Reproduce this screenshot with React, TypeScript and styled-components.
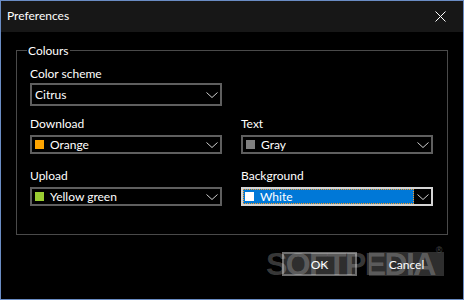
import React from 'react';
import styled, { createGlobalStyle } from 'styled-components';

const Global = createGlobalStyle`
  html, body { margin: 0; padding: 0; background: #000; }
  body { width: 464px; height: 300px; overflow: hidden; font-family: Lato, "Noto Sans", sans-serif; }
  * { box-sizing: border-box; }
`;

const Window = styled.div`
  position: relative;
  width: 464px;
  height: 300px;
  border: 1px solid #6a8cc4;
  background: #000;
  color: #fff;
  font-size: 12px;
  line-height: 15px;
  display: flex;
  flex-direction: column;
`;

const TitleBar = styled.div`
  height: 31px;
  flex: none;
  background: #171717;
  display: flex;
  align-items: flex-start;
  justify-content: space-between;
  padding: 7px 17px 0 6px;
`;

const Title = styled.span`
  color: #fff;
`;

const CloseBtn = styled.svg`
  margin-top: 3px;
  display: block;
`;

const Body = styled.div`
  padding: 18px 15px 0 15px;
  display: flex;
  flex-direction: column;
`;

const Group = styled.div`
  position: relative;
  height: 185px;
  border: 1px solid #4a4a4a;
  padding: 14px 13px 0 13px;
`;

const Legend = styled.span`
  position: absolute;
  top: -8px;
  left: 10px;
  padding: 0 1px;
  background: #000;
`;

const SchemeRow = styled.div`
  margin-bottom: 9px;
`;

const FieldGrid = styled.div`
  display: grid;
  grid-template-columns: 192px 192px;
  column-gap: 19px;
  row-gap: 13px;
`;

const Field = styled.div<{ $gap: number }>`
  display: flex;
  flex-direction: column;
  gap: ${(p) => p.$gap}px;
`;

const Label = styled.div`
  height: 16px;
  padding-top: 1px;
`;

const Combo = styled.div<{ $h: number; $focused?: boolean }>`
  width: 192px;
  height: ${(p) => p.$h}px;
  border: 2px solid ${(p) => (p.$focused ? '#d4d4d4' : '#5f5f5f')};
  display: flex;
  align-items: center;
  padding-left: 3px;
`;

const Selection = styled.div<{ $active?: boolean }>`
  flex: 1;
  height: 100%;
  display: flex;
  align-items: center;
  ${(p) =>
    p.$active
      ? `
    flex: none;
    width: 171px;
    margin-left: -3px;
    padding-left: 2px;
    background: #0078d7;
    outline: 1px dotted #ff9a1f;
    outline-offset: -1px;
  `
      : ''}
`;

const Swatch = styled.span<{ $color: string }>`
  width: 9px;
  height: 9px;
  flex: none;
  background: ${(p) => p.$color};
  margin-right: 6px;
`;

const Chevron = styled.svg`
  flex: none;
  margin-left: auto;
  margin-right: 2px;
  display: block;
`;

const ButtonRow = styled.div`
  margin-top: 17px;
  padding-right: 4px;
  display: flex;
  justify-content: flex-end;
  gap: 12px;
`;

const Button = styled.div<{ $default?: boolean }>`
  width: 75px;
  height: 24px;
  background: #2e2e2e;
  border: 2px solid ${(p) => (p.$default ? '#6e6e6e' : '#2e2e2e')};
  display: flex;
  align-items: center;
  justify-content: center;
  color: #fff;
`;

const Watermark = styled.div`
  position: absolute;
  left: 265px;
  top: 247px;
  font-family: "Liberation Sans", Arial, sans-serif;
  font-weight: bold;
  font-size: 32px;
  line-height: 32px;
  letter-spacing: -1.6px;
  color: rgba(255, 255, 255, 0.24);
  pointer-events: none;
  white-space: nowrap;
  sup {
    font-size: 9px;
    line-height: 9px;
    vertical-align: top;
    position: relative;
    top: -2px;
    left: 1px;
    letter-spacing: 0;
  }
`;

const ChevronIcon = () => (
  <Chevron width="12" height="6" viewBox="0 0 12 6">
    <polyline points="0.5,0.5 6,5.5 11.5,0.5" fill="none" stroke="#cfcfcf" strokeWidth="1" />
  </Chevron>
);

type ColorItem = { label: string; value: string; color: string; focused?: boolean };

const ColorField = ({ label, value, color, focused }: ColorItem) => (
  <Field $gap={4}>
    <Label>{label}</Label>
    <Combo $h={19} $focused={focused}>
      <Selection $active={focused}>
        <Swatch $color={color} />
        <span>{value}</span>
      </Selection>
      <ChevronIcon />
    </Combo>
  </Field>
);

const items: ColorItem[] = [
  { label: 'Download', value: 'Orange', color: '#ffa500' },
  { label: 'Text', value: 'Gray', color: '#808080' },
  { label: 'Upload', value: 'Yellow green', color: '#9acd32' },
  { label: 'Background', value: 'White', color: '#ffffff', focused: true },
];

export default function App() {
  return (
    <>
      <Global />
      <Window>
        <TitleBar>
          <Title>Preferences</Title>
          <CloseBtn width="11" height="11" viewBox="0 0 11 11">
            <path d="M0.5 0.5 L10.5 10.5 M10.5 0.5 L0.5 10.5" stroke="#fff" strokeWidth="1" fill="none" />
          </CloseBtn>
        </TitleBar>
        <Body>
          <Group>
            <Legend>Colours</Legend>
            <SchemeRow>
              <Field $gap={2}>
                <Label>Color scheme</Label>
                <Combo $h={23}>
                  <Selection>
                    <span>Citrus</span>
                  </Selection>
                  <ChevronIcon />
                </Combo>
              </Field>
            </SchemeRow>
            <FieldGrid>
              {items.map((it) => (
                <ColorField key={it.label} {...it} />
              ))}
            </FieldGrid>
          </Group>
          <ButtonRow>
            <Button $default>OK</Button>
            <Button>Cancel</Button>
          </ButtonRow>
        </Body>
        <Watermark>
          SOFTPEDIA<sup>®</sup>
        </Watermark>
      </Window>
    </>
  );
}
